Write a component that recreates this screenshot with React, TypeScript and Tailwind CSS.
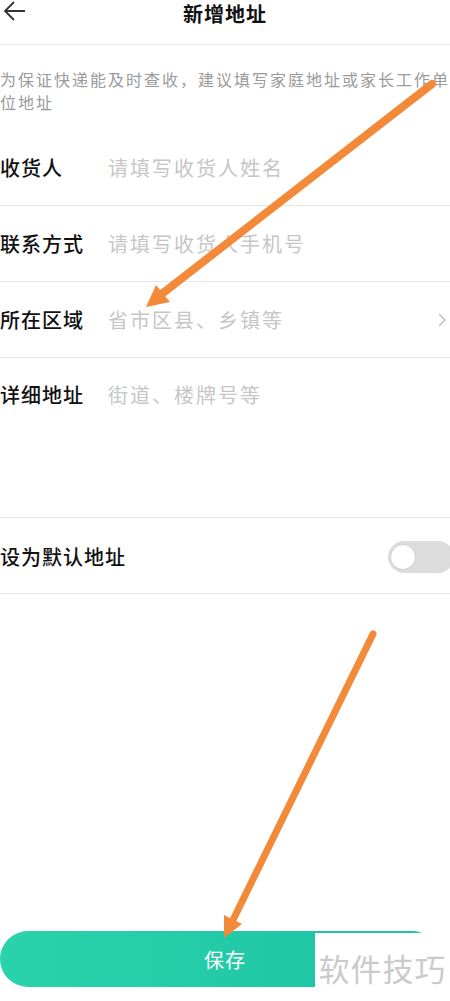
import React from "react";

const font = { fontFamily: '"Noto Sans CJK SC", "Noto Sans", sans-serif' };

const rows = [
  { label: "收货人", hint: "请填写收货人姓名" },
  { label: "联系方式", hint: "请填写收货人手机号" },
  { label: "所在区域", hint: "省市区县、乡镇等", arrow: true },
];

const Field = ({ label, hint, arrow }: { label: string; hint: string; arrow?: boolean }) => (
  <div className="flex h-[76px] items-center border-b border-[#e6e6e6]">
    <span className="w-[108px] shrink-0 text-[20px] font-medium leading-[26px] tracking-[1px] text-[#111]">{label}</span>
    <span className="flex-1 text-[20px] leading-[26px] tracking-[2px] text-[#c6c6c6]">{hint}</span>
    {arrow && (
      <svg width="8" height="14" viewBox="0 0 8 14" className="mr-[4px]">
        <polyline points="1,1 7,7 1,13" fill="none" stroke="#bdbdbd" strokeWidth="1.4" />
      </svg>
    )}
  </div>
);

const App = () => {
  return (
    <div className="relative h-[1001px] w-[450px] overflow-hidden bg-white" style={font}>
      <header className="relative flex h-[45px] items-start justify-center border-b border-[#e8e8e8] pt-[1px]">
        <svg width="24" height="24" viewBox="0 0 24 24" className="absolute left-[3px] top-0">
          <path d="M22 11H3M11 2L2 11l9 9" fill="none" stroke="#333" strokeWidth="1.8" />
        </svg>
        <h1 className="text-[20px] font-bold leading-[26px] tracking-[1px] text-[#111]">新增地址</h1>
      </header>

      <p className="pt-[23px] pb-[16px] text-[16px] leading-[23px] tracking-[2px] text-[#9a9a9a]">
        为保证快递能及时查收，建议填写家庭地址或家长工作单位地址
      </p>

      {rows.map((r) => (
        <Field key={r.label} {...r} />
      ))}

      <div className="flex h-[160px] items-start border-b border-[#e6e6e6] pt-[24px]">
        <span className="w-[108px] shrink-0 text-[20px] font-medium leading-[26px] tracking-[1px] text-[#111]">详细地址</span>
        <span className="text-[20px] leading-[26px] tracking-[2px] text-[#c6c6c6]">街道、楼牌号等</span>
      </div>

      <div className="flex h-[76px] items-center justify-between border-b border-[#e6e6e6] pt-[2px]">
        <span className="text-[20px] font-medium leading-[26px] tracking-[1px] text-[#111]">设为默认地址</span>
        <div className="-mr-[4px] flex h-[32px] w-[66px] items-center rounded-full bg-[#dcdcdc] px-[2px]">
          <div className="h-[26px] w-[26px] rounded-full border border-[#cfcfcf] bg-white" />
        </div>
      </div>

      <div className="mt-[337px] pr-[10px]">
        <button className="flex h-[56px] w-full items-center justify-center rounded-full bg-gradient-to-r from-[#2ad3ab] to-[#1bc2a4] pl-[10px] pt-[2px] text-[20px] tracking-[1px] text-white">
          保存
        </button>
      </div>

      <div className="absolute left-[315px] top-[933px] flex h-[68px] w-[135px] items-center justify-center bg-white">
        <span className="text-[31px] leading-none tracking-[1px] text-[#cacaca]">软件技巧</span>
      </div>

      <svg className="pointer-events-none absolute left-0 top-0" width="450" height="1001">
        <line x1="432" y1="84" x2="163" y2="293" stroke="#f28a3a" strokeWidth="8" strokeLinecap="round" />
        <polygon points="146,307 170,302 156,285" fill="#f28a3a" />
        <line x1="373" y1="634" x2="233" y2="920" stroke="#f28a3a" strokeWidth="7" strokeLinecap="round" />
        <polygon points="224,938 242,924 224,915" fill="#f28a3a" />
      </svg>
    </div>
  );
};

export default App;
